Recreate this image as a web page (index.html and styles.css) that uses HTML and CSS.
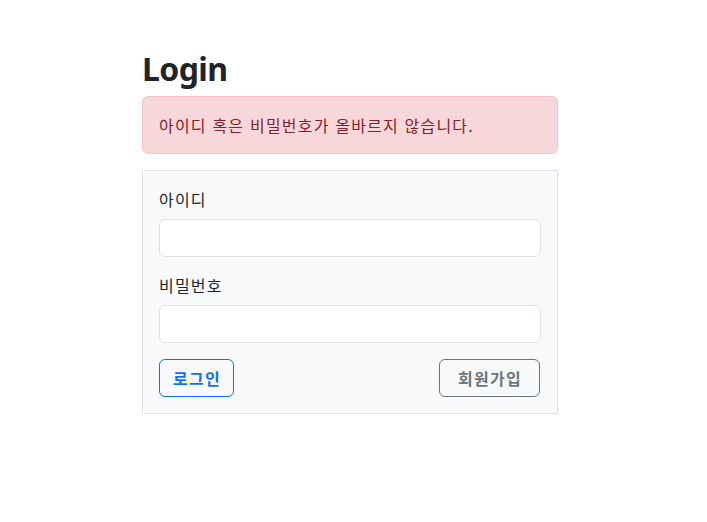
FILE: index.html
```html
<!DOCTYPE html>
<html lang="ko">
<head>
<meta charset="utf-8">
<title>Login</title>
<link rel="stylesheet" href="styles.css">
</head>
<body>
<main class="page">
  <h2 class="title">Login</h2>
  <div class="alert">아이디 혹은 비밀번호가 올바르지 않습니다.</div>
  <form class="card">
    <div class="field">
      <label class="label" for="uid">아이디</label>
      <input class="input" id="uid" type="text">
    </div>
    <div class="field">
      <label class="label" for="pw">비밀번호</label>
      <input class="input" id="pw" type="password">
    </div>
    <div class="actions">
      <button class="btn btn-primary" type="button">로그인</button>
      <button class="btn btn-secondary" type="button">회원가입</button>
    </div>
  </form>
</main>
</body>
</html>
```
FILE: styles.css
```css
* { box-sizing: border-box; }
body {
  margin: 0;
  background: #fff;
  color: #212529;
  font-family: "Noto Sans CJK KR", "Noto Sans", sans-serif;
  font-size: 16px;
  line-height: 24px;
  letter-spacing: 1.2px;
}
.page {
  width: 416px;
  margin-left: 142px;
  padding-top: 50px;
}
.title {
  margin: 0 0 8px;
  font-family: "Noto Sans", "Noto Sans CJK KR", sans-serif;
  font-size: 32px;
  font-weight: 700;
  line-height: 38px;
  color: #212529;
  letter-spacing: -0.6px;
}
.alert {
  padding: 16px;
  margin-bottom: 16px;
  background: #f8d7da;
  border: 1px solid #f5c2c7;
  border-radius: 6px;
  color: #842029;
}
.card {
  margin: 0;
  padding: 16px;
  background: #f8f9fa;
  border: 1px solid #dee2e6;
}
.field {
  display: flex;
  flex-direction: column;
  margin-bottom: 16px;
}
.label {
  margin-bottom: 8px;
}
.input {
  height: 38px;
  padding: 6px 12px;
  border: 1px solid #dee2e6;
  border-radius: 6px;
  background: #fff;
  font: inherit;
}
.actions {
  display: flex;
  justify-content: space-between;
}
.btn {
  height: 38px;
  padding: 0 12px 0 13px;
  background: transparent;
  border-radius: 6px;
  font-family: "Noto Sans CJK KR", sans-serif;
  font-size: 16px;
  font-weight: 700;
  line-height: 24px;
  letter-spacing: 1.3px;
  cursor: pointer;
}
.btn-primary {
  color: #0d6efd;
  border: 1px solid #0d6efd;
}
.btn-secondary {
  color: #6c757d;
  border: 1px solid #6c757d;
  padding: 0 17px 0 18px;
  margin-right: 1px;
}
```
